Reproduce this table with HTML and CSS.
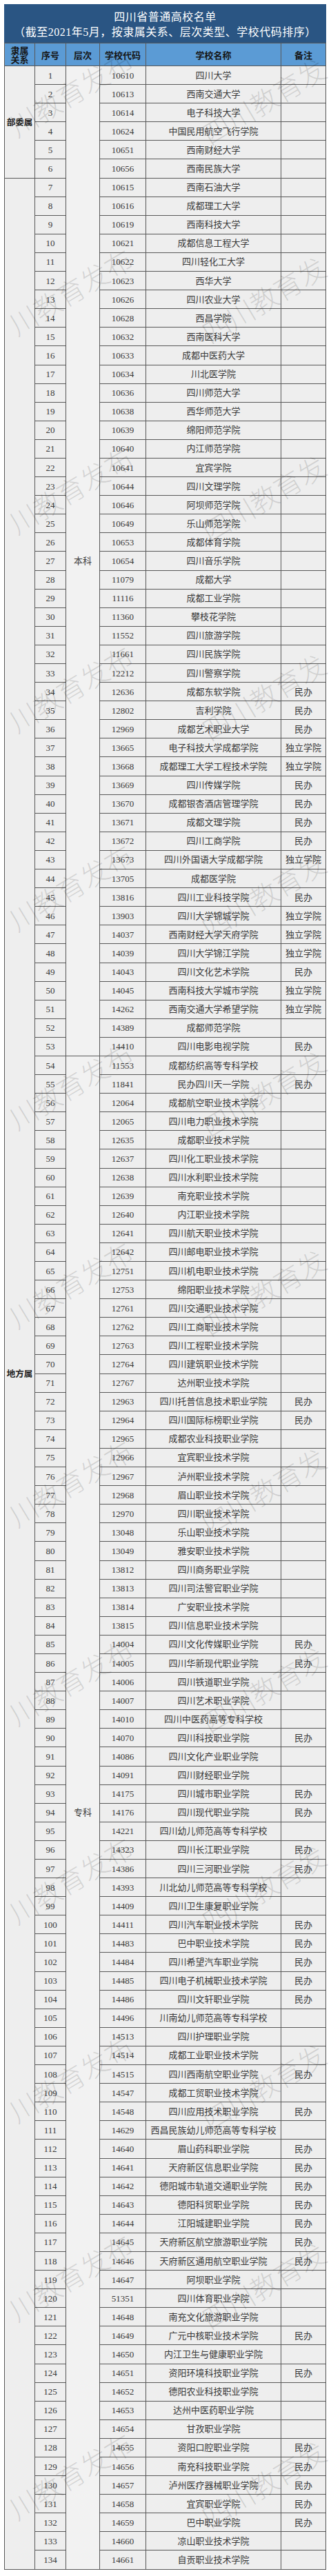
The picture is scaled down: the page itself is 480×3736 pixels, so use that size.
FILE: index.html
```html
<!DOCTYPE html>
<html lang="zh-CN">
<head>
<meta charset="utf-8">
<title>四川省普通高校名单</title>
<link rel="stylesheet" href="styles.css">
</head>
<body>
<div class="sheet">
  <div class="title">
    <div>四川省普通高校名单</div>
    <div>（截至2021年5月，按隶属关系、层次类型、学校代码排序）</div>
  </div>
  <div class="grid">
    <div class="h">隶属<br>关系</div><div class="h">序号</div><div class="h">层次</div><div class="h">学校代码</div><div class="h">学校名称</div><div class="h">备注</div>
    <div class="g g1">部委属</div>
    <div class="g g2">地方属</div>
    <div class="l l1">本科</div>
    <div class="l l2">专科</div>
    <div>1</div><div>10610</div><div>四川大学</div><div></div>
    <div>2</div><div>10613</div><div>西南交通大学</div><div></div>
    <div>3</div><div>10614</div><div>电子科技大学</div><div></div>
    <div>4</div><div>10624</div><div>中国民用航空飞行学院</div><div></div>
    <div>5</div><div>10651</div><div>西南财经大学</div><div></div>
    <div>6</div><div>10656</div><div>西南民族大学</div><div></div>
    <div>7</div><div>10615</div><div>西南石油大学</div><div></div>
    <div>8</div><div>10616</div><div>成都理工大学</div><div></div>
    <div>9</div><div>10619</div><div>西南科技大学</div><div></div>
    <div>10</div><div>10621</div><div>成都信息工程大学</div><div></div>
    <div>11</div><div>10622</div><div>四川轻化工大学</div><div></div>
    <div>12</div><div>10623</div><div>西华大学</div><div></div>
    <div>13</div><div>10626</div><div>四川农业大学</div><div></div>
    <div>14</div><div>10628</div><div>西昌学院</div><div></div>
    <div>15</div><div>10632</div><div>西南医科大学</div><div></div>
    <div>16</div><div>10633</div><div>成都中医药大学</div><div></div>
    <div>17</div><div>10634</div><div>川北医学院</div><div></div>
    <div>18</div><div>10636</div><div>四川师范大学</div><div></div>
    <div>19</div><div>10638</div><div>西华师范大学</div><div></div>
    <div>20</div><div>10639</div><div>绵阳师范学院</div><div></div>
    <div>21</div><div>10640</div><div>内江师范学院</div><div></div>
    <div>22</div><div>10641</div><div>宜宾学院</div><div></div>
    <div>23</div><div>10644</div><div>四川文理学院</div><div></div>
    <div>24</div><div>10646</div><div>阿坝师范学院</div><div></div>
    <div>25</div><div>10649</div><div>乐山师范学院</div><div></div>
    <div>26</div><div>10653</div><div>成都体育学院</div><div></div>
    <div>27</div><div>10654</div><div>四川音乐学院</div><div></div>
    <div>28</div><div>11079</div><div>成都大学</div><div></div>
    <div>29</div><div>11116</div><div>成都工业学院</div><div></div>
    <div>30</div><div>11360</div><div>攀枝花学院</div><div></div>
    <div>31</div><div>11552</div><div>四川旅游学院</div><div></div>
    <div>32</div><div>11661</div><div>四川民族学院</div><div></div>
    <div>33</div><div>12212</div><div>四川警察学院</div><div></div>
    <div>34</div><div>12636</div><div>成都东软学院</div><div>民办</div>
    <div>35</div><div>12802</div><div>吉利学院</div><div>民办</div>
    <div>36</div><div>12969</div><div>成都艺术职业大学</div><div>民办</div>
    <div>37</div><div>13665</div><div>电子科技大学成都学院</div><div>独立学院</div>
    <div>38</div><div>13668</div><div>成都理工大学工程技术学院</div><div>独立学院</div>
    <div>39</div><div>13669</div><div>四川传媒学院</div><div>民办</div>
    <div>40</div><div>13670</div><div>成都银杏酒店管理学院</div><div>民办</div>
    <div>41</div><div>13671</div><div>成都文理学院</div><div>民办</div>
    <div>42</div><div>13672</div><div>四川工商学院</div><div>民办</div>
    <div>43</div><div>13673</div><div>四川外国语大学成都学院</div><div>独立学院</div>
    <div>44</div><div>13705</div><div>成都医学院</div><div></div>
    <div>45</div><div>13816</div><div>四川工业科技学院</div><div>民办</div>
    <div>46</div><div>13903</div><div>四川大学锦城学院</div><div>独立学院</div>
    <div>47</div><div>14037</div><div>西南财经大学天府学院</div><div>独立学院</div>
    <div>48</div><div>14039</div><div>四川大学锦江学院</div><div>独立学院</div>
    <div>49</div><div>14043</div><div>四川文化艺术学院</div><div>民办</div>
    <div>50</div><div>14045</div><div>西南科技大学城市学院</div><div>独立学院</div>
    <div>51</div><div>14262</div><div>西南交通大学希望学院</div><div>独立学院</div>
    <div>52</div><div>14389</div><div>成都师范学院</div><div></div>
    <div>53</div><div>14410</div><div>四川电影电视学院</div><div>民办</div>
    <div>54</div><div>11553</div><div>成都纺织高等专科学校</div><div></div>
    <div>55</div><div>11841</div><div>民办四川天一学院</div><div>民办</div>
    <div>56</div><div>12064</div><div>成都航空职业技术学院</div><div></div>
    <div>57</div><div>12065</div><div>四川电力职业技术学院</div><div></div>
    <div>58</div><div>12635</div><div>成都职业技术学院</div><div></div>
    <div>59</div><div>12637</div><div>四川化工职业技术学院</div><div></div>
    <div>60</div><div>12638</div><div>四川水利职业技术学院</div><div></div>
    <div>61</div><div>12639</div><div>南充职业技术学院</div><div></div>
    <div>62</div><div>12640</div><div>内江职业技术学院</div><div></div>
    <div>63</div><div>12641</div><div>四川航天职业技术学院</div><div></div>
    <div>64</div><div>12642</div><div>四川邮电职业技术学院</div><div></div>
    <div>65</div><div>12751</div><div>四川机电职业技术学院</div><div></div>
    <div>66</div><div>12753</div><div>绵阳职业技术学院</div><div></div>
    <div>67</div><div>12761</div><div>四川交通职业技术学院</div><div></div>
    <div>68</div><div>12762</div><div>四川工商职业技术学院</div><div></div>
    <div>69</div><div>12763</div><div>四川工程职业技术学院</div><div></div>
    <div>70</div><div>12764</div><div>四川建筑职业技术学院</div><div></div>
    <div>71</div><div>12767</div><div>达州职业技术学院</div><div></div>
    <div>72</div><div>12963</div><div>四川托普信息技术职业学院</div><div>民办</div>
    <div>73</div><div>12964</div><div>四川国际标榜职业学院</div><div>民办</div>
    <div>74</div><div>12965</div><div>成都农业科技职业学院</div><div></div>
    <div>75</div><div>12966</div><div>宜宾职业技术学院</div><div></div>
    <div>76</div><div>12967</div><div>泸州职业技术学院</div><div></div>
    <div>77</div><div>12968</div><div>眉山职业技术学院</div><div></div>
    <div>78</div><div>12970</div><div>四川职业技术学院</div><div></div>
    <div>79</div><div>13048</div><div>乐山职业技术学院</div><div></div>
    <div>80</div><div>13049</div><div>雅安职业技术学院</div><div></div>
    <div>81</div><div>13812</div><div>四川商务职业学院</div><div></div>
    <div>82</div><div>13813</div><div>四川司法警官职业学院</div><div></div>
    <div>83</div><div>13814</div><div>广安职业技术学院</div><div></div>
    <div>84</div><div>13815</div><div>四川信息职业技术学院</div><div></div>
    <div>85</div><div>14004</div><div>四川文化传媒职业学院</div><div>民办</div>
    <div>86</div><div>14005</div><div>四川华新现代职业学院</div><div>民办</div>
    <div>87</div><div>14006</div><div>四川铁道职业学院</div><div></div>
    <div>88</div><div>14007</div><div>四川艺术职业学院</div><div></div>
    <div>89</div><div>14010</div><div>四川中医药高等专科学校</div><div></div>
    <div>90</div><div>14070</div><div>四川科技职业学院</div><div>民办</div>
    <div>91</div><div>14086</div><div>四川文化产业职业学院</div><div></div>
    <div>92</div><div>14091</div><div>四川财经职业学院</div><div></div>
    <div>93</div><div>14175</div><div>四川城市职业学院</div><div>民办</div>
    <div>94</div><div>14176</div><div>四川现代职业学院</div><div>民办</div>
    <div>95</div><div>14221</div><div>四川幼儿师范高等专科学校</div><div></div>
    <div>96</div><div>14323</div><div>四川长江职业学院</div><div>民办</div>
    <div>97</div><div>14386</div><div>四川三河职业学院</div><div>民办</div>
    <div>98</div><div>14393</div><div>川北幼儿师范高等专科学校</div><div></div>
    <div>99</div><div>14409</div><div>四川卫生康复职业学院</div><div></div>
    <div>100</div><div>14411</div><div>四川汽车职业技术学院</div><div>民办</div>
    <div>101</div><div>14483</div><div>巴中职业技术学院</div><div>民办</div>
    <div>102</div><div>14484</div><div>四川希望汽车职业学院</div><div>民办</div>
    <div>103</div><div>14485</div><div>四川电子机械职业技术学院</div><div>民办</div>
    <div>104</div><div>14486</div><div>四川文轩职业学院</div><div>民办</div>
    <div>105</div><div>14496</div><div>川南幼儿师范高等专科学校</div><div></div>
    <div>106</div><div>14513</div><div>四川护理职业学院</div><div></div>
    <div>107</div><div>14514</div><div>成都工业职业技术学院</div><div></div>
    <div>108</div><div>14515</div><div>四川西南航空职业学院</div><div>民办</div>
    <div>109</div><div>14547</div><div>成都工贸职业技术学院</div><div></div>
    <div>110</div><div>14548</div><div>四川应用技术职业学院</div><div>民办</div>
    <div>111</div><div>14629</div><div>西昌民族幼儿师范高等专科学校</div><div></div>
    <div>112</div><div>14640</div><div>眉山药科职业学院</div><div>民办</div>
    <div>113</div><div>14641</div><div>天府新区信息职业学院</div><div>民办</div>
    <div>114</div><div>14642</div><div>德阳城市轨道交通职业学院</div><div>民办</div>
    <div>115</div><div>14643</div><div>德阳科贸职业学院</div><div>民办</div>
    <div>116</div><div>14644</div><div>江阳城建职业学院</div><div>民办</div>
    <div>117</div><div>14645</div><div>天府新区航空旅游职业学院</div><div>民办</div>
    <div>118</div><div>14646</div><div>天府新区通用航空职业学院</div><div>民办</div>
    <div>119</div><div>14647</div><div>阿坝职业学院</div><div></div>
    <div>120</div><div>51351</div><div>四川体育职业学院</div><div></div>
    <div>121</div><div>14648</div><div>南充文化旅游职业学院</div><div></div>
    <div>122</div><div>14649</div><div>广元中核职业技术学院</div><div>民办</div>
    <div>123</div><div>14650</div><div>内江卫生与健康职业学院</div><div></div>
    <div>124</div><div>14651</div><div>资阳环境科技职业学院</div><div>民办</div>
    <div>125</div><div>14652</div><div>德阳农业科技职业学院</div><div></div>
    <div>126</div><div>14653</div><div>达州中医药职业学院</div><div></div>
    <div>127</div><div>14654</div><div>甘孜职业学院</div><div></div>
    <div>128</div><div>14655</div><div>资阳口腔职业学院</div><div>民办</div>
    <div>129</div><div>14656</div><div>南充科技职业学院</div><div>民办</div>
    <div>130</div><div>14657</div><div>泸州医疗器械职业学院</div><div>民办</div>
    <div>131</div><div>14658</div><div>宜宾职业学院</div><div>民办</div>
    <div>132</div><div>14659</div><div>巴中职业学院</div><div>民办</div>
    <div>133</div><div>14660</div><div>凉山职业技术学院</div><div></div>
    <div>134</div><div>14661</div><div>自贡职业技术学院</div><div></div>
  </div>
  <div class="wm" aria-hidden="true">
    <div class="wmrow"><span>川教育发布</span><span>四川教育发</span></div>
    <div class="wmrow"><span>川教育发布</span><span>四川教育发</span></div>
    <div class="wmrow"><span>川教育发布</span><span>四川教育发</span></div>
    <div class="wmrow"><span>川教育发布</span><span>四川教育发</span></div>
    <div class="wmrow"><span>川教育发布</span><span>四川教育发</span></div>
    <div class="wmrow"><span>川教育发布</span><span>四川教育发</span></div>
    <div class="wmrow"><span>川教育发布</span><span>四川教育发</span></div>
    <div class="wmrow"><span>川教育发布</span><span>四川教育发</span></div>
    <div class="wmrow"><span>川教育发布</span><span>四川教育发</span></div>
    <div class="wmrow"><span>川教育发布</span><span>四川教育发</span></div>
    <div class="wmrow"><span>川教育发布</span><span>四川教育发</span></div>
    <div class="wmrow"><span>川教育发布</span><span>四川教育发</span></div>
    <div class="wmrow"><span>川教育发布</span><span>四川教育发</span></div>
  </div>
</div>
</body>
</html>
```

FILE: styles.css
```css
html, body {
  margin: 0;
  padding: 0;
  background: #ffffff;
}

body {
  font-family: "Liberation Serif", "Noto Sans CJK SC", serif;
  color: #383838;
}

.sheet {
  position: relative;
  width: 480px;
  height: 3736px;
  padding: 6px 0 0 6px;
  box-sizing: border-box;
}

.title {
  width: 467px;
  height: 56px;
  box-sizing: border-box;
  padding-top: 8px;
  background: #2a5583;
  color: #ffffff;
  text-align: center;
  font-size: 16px;
  line-height: 22px;
  letter-spacing: 0.5px;
}

.grid {
  display: grid;
  width: 467px;
  box-sizing: border-box;
  grid-template-columns: 43px 44px 48px 66px 195px 64px;
  grid-template-rows: 32px repeat(134, 26.1px);
  gap: 1px;
  padding: 1px;
  background: #585858;
}

.grid > div {
  display: flex;
  align-items: center;
  justify-content: center;
  text-align: center;
  background: #eeeeee;
  font-size: 13px;
  line-height: 1;
  white-space: nowrap;
}

.grid > .h {
  background: #5b9bd5;
  color: #161616;
  font-family: "Noto Sans CJK SC", sans-serif;
  font-weight: bold;
  font-size: 13px;
  line-height: 13px;
}

.grid > .g {
  grid-column: 1;
  font-family: "Noto Sans CJK SC", sans-serif;
  font-weight: bold;
  font-size: 12.5px;
  color: #202020;
}

.g1 { grid-row: 2 / 8; }
.g2 { grid-row: 8 / 136; }

.grid > .l {
  grid-column: 3;
  background: #f2f2f2;
  color: #404040;
}

.l1 { grid-row: 2 / 55; }
.l2 { grid-row: 55 / 136; }

.wm {
  position: absolute;
  left: 0;
  top: 0;
  width: 480px;
  height: 3736px;
  padding-top: 114px;
  box-sizing: border-box;
  pointer-events: none;
}

.wmrow {
  height: 288px;
  display: flex;
  align-items: flex-start;
  gap: 80px;
  margin-left: 2px;
}

.wmrow span {
  flex: none;
  width: 200px;
  font-family: "Noto Sans CJK SC", sans-serif;
  font-weight: 300;
  font-size: 40px;
  line-height: 40px;
  white-space: nowrap;
  color: rgba(0, 0, 0, 0.13);
  transform: rotate(-31deg);
}

.wmrow span + span {
  margin-top: 12px;
}
```
